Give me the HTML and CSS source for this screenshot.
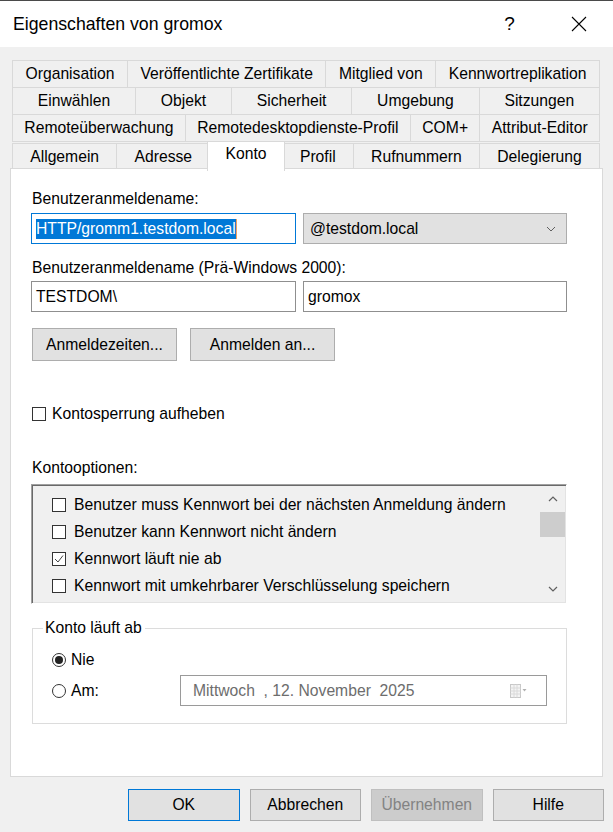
FILE: index.html
```html
<!DOCTYPE html>
<html lang="de">
<head>
  <meta charset="UTF-8">
  <title>Eigenschaften von gromox</title>
  <link rel="stylesheet" href="styles.css">
</head>
<body>
  <div class="window">
    <div class="titlebar">
      <div class="title">Eigenschaften von gromox</div>
      <div class="caption-btn">?</div>
      <div class="caption-btn">
        <svg width="16" height="16" viewBox="0 0 16 16"><path d="M1 1 L15 15 M15 1 L1 15" stroke="#000" stroke-width="1.1" fill="none"/></svg>
      </div>
    </div>

    <!-- Registerkarten -->
    <div class="tabs">
      <div class="tab-row">
        <div class="tab">Organisation</div>
        <div class="tab">Veröffentlichte Zertifikate</div>
        <div class="tab">Mitglied von</div>
        <div class="tab">Kennwortreplikation</div>
      </div>
      <div class="tab-row">
        <div class="tab">Einwählen</div>
        <div class="tab">Objekt</div>
        <div class="tab">Sicherheit</div>
        <div class="tab">Umgebung</div>
        <div class="tab">Sitzungen</div>
      </div>
      <div class="tab-row">
        <div class="tab">Remoteüberwachung</div>
        <div class="tab">Remotedesktopdienste-Profil</div>
        <div class="tab">COM+</div>
        <div class="tab">Attribut-Editor</div>
      </div>
      <div class="tab-row last">
        <div class="tab">Allgemein</div>
        <div class="tab">Adresse</div>
        <div class="tab active">Konto</div>
        <div class="tab">Profil</div>
        <div class="tab">Rufnummern</div>
        <div class="tab">Delegierung</div>
      </div>
    </div>

    <div class="panel">
      <div class="label">Benutzeranmeldename:</div>
      <div class="field-row">
        <div class="input focus"><span class="selected">HTTP/gromm1.testdom.local</span><span class="caret"></span></div>
        <div class="combo">
          <span>@testdom.local</span>
          <svg width="10" height="6" viewBox="0 0 10 6"><path d="M1 1 L5 5 L9 1" stroke="#606060" stroke-width="1" fill="none"/></svg>
        </div>
      </div>

      <div class="label label2">Benutzeranmeldename (Prä-Windows 2000):</div>
      <div class="field-row row2">
        <div class="input">TESTDOM\</div>
        <div class="input wide">gromox</div>
      </div>

      <div class="btn-row">
        <div class="btn">Anmeldezeiten...</div>
        <div class="btn">Anmelden an...</div>
      </div>

      <div class="check-row unlock">
        <span class="box"></span>
        <span>Kontosperrung aufheben</span>
      </div>

      <div class="label label3">Kontooptionen:</div>
      <div class="listbox">
        <div class="list-items">
          <div class="check-row item"><span class="box"></span><span>Benutzer muss Kennwort bei der nächsten Anmeldung ändern</span></div>
          <div class="check-row item"><span class="box"></span><span>Benutzer kann Kennwort nicht ändern</span></div>
          <div class="check-row item">
            <span class="box">
              <svg width="12" height="12" viewBox="0 0 12 12"><path d="M2 6 L5 9 L10 2.5" stroke="#444" stroke-width="1" fill="none"/></svg>
            </span>
            <span>Kennwort läuft nie ab</span>
          </div>
          <div class="check-row item"><span class="box"></span><span>Kennwort mit umkehrbarer Verschlüsselung speichern</span></div>
        </div>
        <div class="scrollbar">
          <div class="arrow">
            <svg width="10" height="6" viewBox="0 0 10 6"><path d="M1 5 L5 1 L9 5" stroke="#606060" stroke-width="1.2" fill="none"/></svg>
          </div>
          <div class="thumb"></div>
          <div class="track"></div>
          <div class="arrow">
            <svg width="10" height="6" viewBox="0 0 10 6"><path d="M1 1 L5 5 L9 1" stroke="#606060" stroke-width="1.2" fill="none"/></svg>
          </div>
        </div>
      </div>

      <fieldset class="group">
        <legend>Konto läuft ab</legend>
        <div class="radio-row">
          <span class="radio checked"></span>
          <span>Nie</span>
        </div>
        <div class="radio-row am">
          <div class="radio-label">
            <span class="radio"></span>
            <span>Am:</span>
          </div>
          <div class="datepicker">
            <span>Mittwoch &nbsp;, 12. November &nbsp;2025</span>
            <svg width="18" height="14" viewBox="0 0 18 14">
              <rect x="0.5" y="0.5" width="10" height="13" fill="#f4f4f4" stroke="#c8c8c8"/>
              <path d="M0.5 4 H10.5 M0.5 7 H10.5 M0.5 10 H10.5 M4 0.5 V13.5 M7 0.5 V13.5" stroke="#dadada" stroke-width="1"/>
              <path d="M12.5 5 L16.5 5 L14.5 7.5 Z" fill="#b0b0b0"/>
            </svg>
          </div>
        </div>
      </fieldset>
    </div>

    <div class="footer">
      <div class="btn default">OK</div>
      <div class="btn">Abbrechen</div>
      <div class="btn disabled">Übernehmen</div>
      <div class="btn">Hilfe</div>
    </div>
  </div>
</body>
</html>
```

FILE: styles.css
```css
body {
  margin: 0;
  padding: 0;
  background-color: #f0f0f0;
  color: #000;
  font-family: "Liberation Sans", Arial, sans-serif;
  font-size: 15.7px;
}

.window {
  width: 613px;
  height: 832px;
  box-sizing: border-box;
  border-top: 1px solid #4a4a4a;
  display: flex;
  flex-direction: column;
}

/* Titelleiste */
.titlebar {
  height: 46px;
  flex: none;
  background-color: #fff;
  display: flex;
  align-items: center;
  padding-left: 13px;
}

.title {
  flex: 1;
  font-size: 17.7px;
}

.caption-btn {
  width: 69px;
  height: 46px;
  display: flex;
  align-items: center;
  justify-content: center;
  font-size: 19px;
}

/* Registerkarten */
.tabs {
  margin: 13px 13px 0 12px;
  flex: none;
}

.tab-row {
  display: flex;
  height: 28px;
  margin-top: -1px;
}

.tab-row:first-child {
  margin-top: 0;
}

.tab {
  flex: 1 1 auto;
  display: flex;
  align-items: center;
  justify-content: center;
  padding: 0 5px;
  margin-left: -1px;
  border: 1px solid #d9d9d9;
  background-color: #f0f0f0;
  white-space: nowrap;
}

.tab:first-child {
  margin-left: 0;
}

.tab-row.last .tab {
  margin-top: 2px;
  border-bottom: none;
}

.tab-row.last .tab.active {
  margin: 0 -2px -2px -3px;
  padding-bottom: 5px;
  background-color: #fff;
  position: relative;
  z-index: 1;
}

/* Inhaltsbereich */
.panel {
  flex: 1;
  margin: -1px 10px 0;
  background-color: #fff;
  border: 1px solid #d9d9d9;
  padding: 21px 35px 0 20px;
}

.label {
  height: 18px;
  line-height: 18px;
  padding-left: 1px;
}

.label2 {
  margin-top: 15px;
}

.label3 {
  margin-top: 35px;
}

.field-row {
  display: flex;
  gap: 7px;
  margin-top: 5px;
}

.field-row.row2 {
  margin-top: 4px;
}

.input {
  width: 265px;
  height: 31px;
  box-sizing: border-box;
  border: 1px solid #8f8f8f;
  display: flex;
  align-items: center;
  padding-left: 4px;
}

.input.wide {
  width: 264px;
}

.input.focus {
  border-color: #0078d7;
}

.selected {
  background-color: #0078d7;
  color: #fff;
  line-height: 20px;
}

.caret {
  width: 1px;
  height: 20px;
  background-color: #f0a060;
}

.combo {
  width: 264px;
  height: 31px;
  box-sizing: border-box;
  border: 1px solid #adadad;
  background-color: #e1e1e1;
  display: flex;
  align-items: center;
  justify-content: space-between;
  padding: 0 10px 0 6px;
}

.btn-row {
  display: flex;
  gap: 13px;
  margin-top: 16px;
  padding-left: 1px;
}

.btn {
  width: 145px;
  height: 33px;
  box-sizing: border-box;
  border: 1px solid #adadad;
  background-color: #e1e1e1;
  display: flex;
  align-items: center;
  justify-content: center;
}

.check-row {
  display: flex;
  align-items: center;
  gap: 6px;
}

.box {
  width: 14px;
  height: 14px;
  box-sizing: border-box;
  border: 1px solid #333;
  background-color: #fff;
  display: flex;
  align-items: center;
  justify-content: center;
}

.unlock {
  height: 20px;
  margin-top: 43px;
  padding-left: 1px;
}

/* Kontooptionen */
.listbox {
  margin-top: 7px;
  width: 536px;
  height: 120px;
  box-sizing: border-box;
  border: 1px solid #a0a0a0;
  border-right-color: #fff;
  border-bottom-color: #fff;
  box-shadow: inset 1px 1px 0 #696969, inset -1px -1px 0 #e3e3e3;
  background-color: #f0f0f0;
  display: flex;
  padding: 1px;
}

.list-items {
  flex: 1;
  padding: 5px 0 0 19px;
}

.item {
  height: 27px;
  gap: 8px;
}

.scrollbar {
  width: 25px;
  display: flex;
  flex-direction: column;
}

.arrow {
  height: 26px;
  display: flex;
  align-items: center;
  justify-content: center;
}

.thumb {
  height: 25px;
  background-color: #cdcdcd;
}

.track {
  flex: 1;
}

/* Konto läuft ab */
.group {
  margin: 15px 0 0 1px;
  width: 535px;
  box-sizing: border-box;
  border: 1px solid #dcdcdc;
  padding: 0 19px 17px 19px;
}

.group legend {
  margin-left: -9px;
  padding: 0 3px 0 2px;
  line-height: 18px;
}

.radio-row {
  display: flex;
  align-items: center;
  gap: 5px;
  height: 24px;
  margin-top: 11px;
}

.radio-row.am {
  height: 31px;
  margin-top: 3px;
}

.radio-label {
  width: 123px;
  display: flex;
  align-items: center;
  gap: 5px;
}

.radio {
  width: 14px;
  height: 14px;
  box-sizing: border-box;
  border: 1px solid #333;
  border-radius: 50%;
  background-color: #fff;
  display: flex;
  align-items: center;
  justify-content: center;
}

.radio.checked::after {
  content: "";
  width: 8px;
  height: 8px;
  border-radius: 50%;
  background-color: #222;
}

.datepicker {
  width: 367px;
  height: 31px;
  box-sizing: border-box;
  border: 1px solid #9a9a9a;
  display: flex;
  align-items: center;
  justify-content: space-between;
  padding: 0 18px 0 12px;
  color: #6d6d6d;
}

/* Schaltflächen unten */
.footer {
  height: 55px;
  flex: none;
  box-sizing: border-box;
  display: flex;
  justify-content: flex-end;
  gap: 10px;
  padding: 12px 9px 0 0;
}

.footer .btn {
  width: 111.5px;
  height: 32px;
}

.footer .btn.default {
  border-color: #0078d7;
}

.footer .btn.disabled {
  background-color: #cccccc;
  border-color: #bfbfbf;
  color: #838383;
}
```
